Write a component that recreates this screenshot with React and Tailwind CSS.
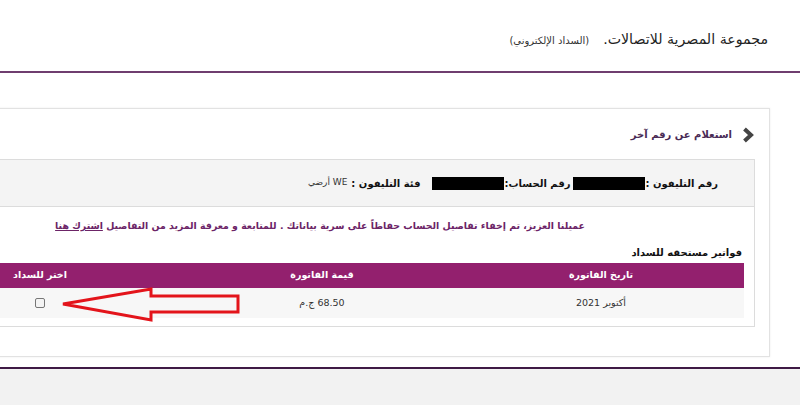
import React from "react";

const F = { fontFamily: '"DejaVu Sans", sans-serif' };

function Arrow() {
  return (
    <svg width="200" height="40" viewBox="0 0 200 40" className="absolute left-[50px] top-[284px]">
      <polygon
        points="13,20 101,5 101,12 188,12 188,28 101,28 101,36"
        fill="none"
        stroke="#e3141b"
        strokeWidth="3"
        strokeLinejoin="miter"
      />
    </svg>
  );
}

export default function App() {
  return (
    <div className="relative w-[800px] h-[405px] overflow-hidden bg-white" style={F}>
      {/* header */}
      <div dir="rtl" className="h-[73px] border-b-[2px] border-[#6f3d6f] flex items-center pr-[32px] pt-[8px] gap-[14px]">
        <div className="text-[14.2px] text-[#222]">مجموعة المصرية للاتصالات.</div>
        <div className="text-[10px] text-[#333] pt-[2px]">(السداد الإلكتروني)</div>
      </div>

      {/* body */}
      <div dir="rtl" className="h-[294px] pt-[35px]">
        <div className="mr-[30px] w-[905px] h-[249px] border border-[#e2e2e2] shadow-[0_0_2px_rgba(0,0,0,0.08)] px-[14px]">
          <div className="h-[50px] flex items-center gap-[10px] pr-[1px] pt-[1px]">
            <svg width="12" height="16" viewBox="0 0 12 16">
              <path d="M2.5 2 L9 8 L2.5 14" fill="none" stroke="#444" strokeWidth="4" />
            </svg>
            <span className="text-[10px] font-bold text-[#4a2b55]">استعلام عن رقم آخر</span>
          </div>
          <div className="border border-[#dcdcdc] h-[168px]">
            <div className="h-[47px] bg-[#f4f4f4] border-b border-[#dcdcdc] flex items-center pr-[36px] text-[10px] font-bold text-[#111]">
              <span>رقم التليفون :</span>
              <span className="inline-block w-[72px] h-[13px] bg-black"></span>
              <span className="mr-[3px]">رقم الحساب:</span>
              <span className="inline-block w-[72px] h-[13px] bg-black"></span>
              <span className="mr-[12px]">فئة التليفون :</span>
              <span className="mr-[4px] font-normal text-[9px] text-[#333]">WE أرضي</span>
            </div>
            <div className="px-[10px]">
              <div className="h-[36px] flex items-center pr-[159px] pt-[2px] text-[9.4px] font-bold text-[#6c2467]">
                <span>
                  عميلنا العزيز، تم إخفاء تفاصيل الحساب حفاظاً على سرية بياناتك . للمتابعة و معرفة المزيد من التفاصيل{" "}
                  <span className="underline">اشترك هنا</span>
                </span>
              </div>
              <div className="h-[18px] flex items-center pr-[2px] text-[10px] font-bold text-[#111]">فواتير مستحقه للسداد</div>
              <div className="mt-[2px] grid grid-cols-[286px_272px_292px] h-[25px] bg-[#93206e] text-white text-[9.5px] font-bold tracking-[1px] items-center text-center">
                <div>تاريخ الفاتورة</div>
                <div>قيمة الفاتورة</div>
                <div>اختر للسداد</div>
              </div>
              <div className="grid grid-cols-[286px_272px_292px] h-[30px] bg-[#f7f7f7] text-[9.5px] text-[#333] items-center text-center">
                <div>أكتوبر 2021</div>
                <div>68.50 ج.م</div>
                <div className="flex justify-center">
                  <span className="inline-block w-[10px] h-[10px] border border-[#777] rounded-[2px] bg-[#f4f4f4]"></span>
                </div>
              </div>
            </div>
          </div>
        </div>
      </div>

      {/* footer */}
      <div className="h-[38px] border-t-[2px] border-[#3f1a45] bg-[#f2f2f2]"></div>

      <Arrow />
    </div>
  );
}
